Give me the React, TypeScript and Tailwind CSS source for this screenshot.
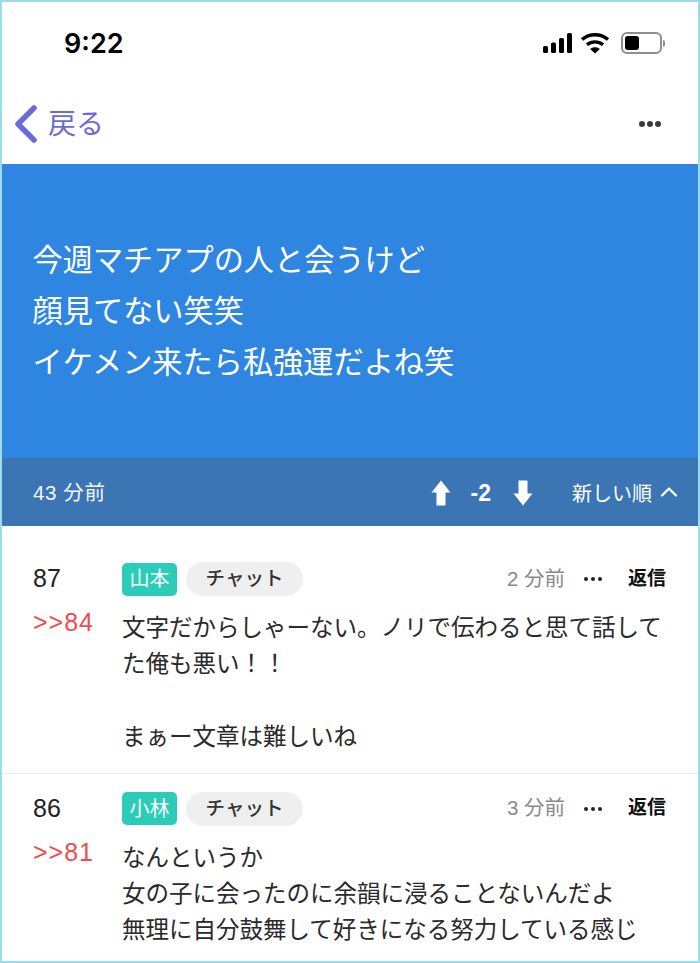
import { ChevronUp } from 'lucide-react'

const jp = "font-['Liberation_Sans','Noto_Sans_CJK_JP',sans-serif]"

type Comment = {
  no: number
  reply: string
  name: string
  time: string
  lines: string[]
  last?: boolean
}

const comments: Comment[] = [
  {
    no: 87,
    reply: '>>84',
    name: '山本',
    time: '2 分前',
    lines: ['文字だからしゃーない。ノリで伝わると思て話して', 'た俺も悪い！！', '', 'まぁー文章は難しいね'],
  },
  {
    no: 86,
    reply: '>>81',
    name: '小林',
    time: '3 分前',
    lines: ['なんというか', '女の子に会ったのに余韻に浸ることないんだよ', '無理に自分鼓舞して好きになる努力している感じ'],
    last: true,
  },
]

const StatusIcons = () => (
  <div className="flex items-center gap-[5px]">
    <svg width="32" height="22" viewBox="0 0 32 22" fill="#000">
      <rect x="1" y="14" width="5" height="7" rx="1.5" />
      <rect x="9" y="10.5" width="5" height="10.5" rx="1.5" />
      <rect x="17" y="6" width="5" height="15" rx="1.5" />
      <rect x="25" y="1" width="5" height="20" rx="1.5" />
    </svg>
    <svg width="30" height="22" viewBox="0 0 30 22" fill="none" stroke="#000" strokeWidth="3.4" className="ml-[1px]">
      <path d="M2 7.5C9.5 1.2 20.5 1.2 28 7.5" />
      <path d="M7 12.8C11.8 8.9 18.2 8.9 23 12.8" />
      <path d="M15 21.5L10.2 17C13 14.8 17 14.8 19.8 17Z" fill="#000" stroke="none" />
    </svg>
    <div className="ml-[6px] flex items-center gap-[1px]">
      <div className="flex h-[22px] w-[41px] items-center rounded-[6px] border-2 border-[#8f8f8f] p-[2px]">
        <div className="h-full w-[14px] rounded-[3px] bg-black" />
      </div>
      <div className="h-[7px] w-[2px] rounded-r-full bg-[#8f8f8f]" />
    </div>
  </div>
)

const Dots = ({ size, gap, color }: { size: string; gap: string; color: string }) => (
  <div className={`flex items-center ${gap}`}>
    <span className={`${size} ${color} rounded-full`} />
    <span className={`${size} ${color} rounded-full`} />
    <span className={`${size} ${color} rounded-full`} />
  </div>
)

const ArrowUp = () => (
  <svg width="20" height="26" viewBox="0 0 20 26" fill="#fff">
    <path d="M10 0.5L19.5 12.5H14.5V25.5H5.5V12.5H0.5Z" />
  </svg>
)

const ArrowDown = () => (
  <svg width="20" height="26" viewBox="0 0 20 26" fill="#fff">
    <path d="M10 25.5L19.5 13.5H14.5V0.5H5.5V13.5H0.5Z" />
  </svg>
)

const CommentRow = ({ c }: { c: Comment }) => (
  <div className={`flex pl-[31px] pr-[32px] ${c.last ? 'pt-[18px]' : 'border-b border-[#e8e8e8] pt-[36px] pb-[17px]'}`}>
    <div className="w-[89px] shrink-0">
      <div className="h-[36px] text-[25px] leading-[32px] text-[#222]">{c.no}</div>
      <div className="mt-[8px] text-[25px] leading-[33px] tracking-[1px] text-[#f04b4f]">{c.reply}</div>
    </div>
    <div className="min-w-0 flex-1">
      <div className="flex h-[34px] items-center">
        <span className="flex h-[33px] w-[55px] items-center justify-center rounded-[5px] bg-[#2bcdb9] text-[20px] text-white">
          {c.name}
        </span>
        <span className="ml-[9px] flex h-[34px] w-[117px] items-center justify-center rounded-full bg-[#efefef] text-[19.5px] font-medium text-[#333]">
          チャット
        </span>
        <span className="ml-auto text-[20.5px] text-[#8a8a8a]">{c.time}</span>
        <div className="ml-[19px]">
          <Dots size="size-[4px]" gap="gap-[3px]" color="bg-[#222]" />
        </div>
        <span className="ml-[26px] text-[19px] font-bold text-[#111]">返信</span>
      </div>
      <div className="mt-[14px] text-[23.5px] leading-[36.4px] whitespace-nowrap text-[#2a2a2a]">
        {c.lines.map((line, i) => (
          <div key={i} className="h-[36.4px]">{line}</div>
        ))}
      </div>
    </div>
  </div>
)

export default function App() {
  return (
    <div className={`${jp} h-[963px] w-[700px] overflow-hidden border-2 border-[#9cdbe9] bg-white`}>
      <div className="flex h-[82px] items-center justify-between pr-[33px] pl-[62px]">
        <span className="font-['Inter',sans-serif] pt-[2px] text-[27px] font-semibold text-black">9:22</span>
        <StatusIcons />
      </div>
      <div className="flex h-[80px] items-center justify-between pr-[37px] pl-[12px]">
        <div className="flex items-center gap-[10px]">
          <svg width="24" height="38" viewBox="0 0 24 38" fill="none" stroke="#6a6bd8" strokeWidth="5.5" strokeLinecap="round" strokeLinejoin="round">
            <path d="M20 3L4 19L20 35" />
          </svg>
          <span className="pt-[2px] text-[28px] text-[#6a6bd8]">戻る</span>
        </div>
        <Dots size="size-[6px]" gap="gap-[2px]" color="bg-[#3c3c3c]" />
      </div>
      <div className="flex h-[294px] flex-col justify-center bg-[#2e86e0] pl-[30.5px] pt-[1px]">
        <div className="text-[30.2px] leading-[51px] text-white">今週マチアプの人と会うけど</div>
        <div className="text-[30.2px] leading-[51px] text-white">顔見てない笑笑</div>
        <div className="text-[30.2px] leading-[51px] text-white">イケメン来たら私強運だよね笑</div>
      </div>
      <div className="flex h-[68px] items-center bg-[#3b75b4] pr-[15px] pl-[31px] text-white">
        <span className="pt-[3px] text-[20.5px] tracking-[0.6px] text-[#f2f6fb]">43 分前</span>
        <div className="ml-auto flex items-center pt-[2px]">
          <ArrowUp />
          <span className="ml-[20px] text-[23px] font-bold">-2</span>
          <div className="ml-[22px]">
            <ArrowDown />
          </div>
        </div>
        <span className="ml-[39px] pt-[3px] text-[20px]">新しい順</span>
        <ChevronUp className="ml-[3px] size-[28px]" strokeWidth={2} />
      </div>
      {comments.map((c) => (
        <CommentRow key={c.no} c={c} />
      ))}
    </div>
  )
}
